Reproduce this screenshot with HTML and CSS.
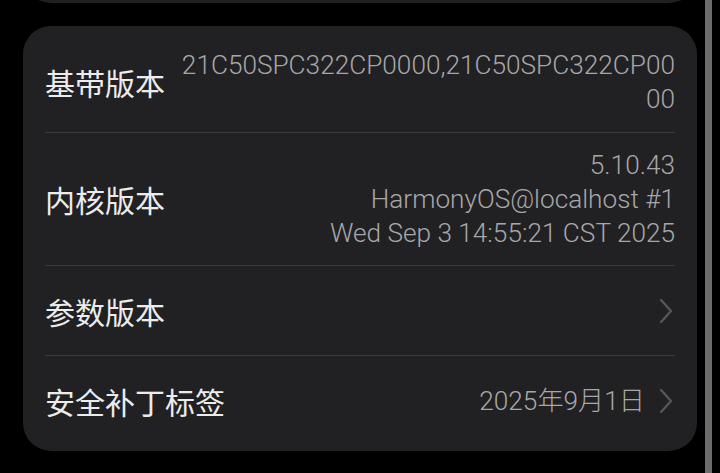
FILE: index.html
```html
<!DOCTYPE html>
<html lang="zh-CN">
<head>
<meta charset="utf-8">
<link rel="stylesheet" href="styles.css">
</head>
<body>
<div class="screen">
  <main class="content">
    <div class="card card-prev"></div>
    <section class="card card-main">
      <div class="row row-baseband">
        <div class="label">基带版本</div>
        <div class="value value-wrap">21C50SPC322CP0000,21C50SPC322CP0000</div>
      </div>
      <div class="row row-kernel">
        <div class="label">内核版本</div>
        <div class="value">5.10.43<br>HarmonyOS@localhost #1<br>Wed Sep 3 14:55:21 CST 2025</div>
      </div>
      <div class="row row-link">
        <div class="label">参数版本</div>
        <div class="value"></div>
        <svg class="chev" viewBox="0 0 16 26" width="16" height="26"><path d="M3 2 L13 13 L3 24" fill="none" stroke="#58585a" stroke-width="2.2" stroke-linecap="round" stroke-linejoin="round"/></svg>
      </div>
      <div class="row row-link last">
        <div class="label">安全补丁标签</div>
        <div class="value">2025年9月1日</div>
        <svg class="chev" viewBox="0 0 16 26" width="16" height="26"><path d="M3 2 L13 13 L3 24" fill="none" stroke="#58585a" stroke-width="2.2" stroke-linecap="round" stroke-linejoin="round"/></svg>
      </div>
    </section>
  </main>
  <div class="scrollbar"></div>
</div>
</body>
</html>
```

FILE: styles.css
```css
html, body {
  margin: 0;
  padding: 0;
  background: #000;
  width: 720px;
  height: 473px;
  overflow: hidden;
}
.screen {
  display: flex;
  height: 473px;
}
.content {
  width: 674px;
  padding-left: 23px;
  display: flex;
  flex-direction: column;
}
.card {
  background: #212123;
  border-radius: 28px;
}
.card-prev {
  height: 60px;
  margin-top: -57px;
}
.card-main {
  margin-top: 23px;
  padding: 6px 22px;
  display: flex;
  flex-direction: column;
}
.row {
  display: flex;
  align-items: center;
  gap: 12px;
  padding: 16px 0;
  border-bottom: 1px solid #3a3a3c;
}
.row-kernel {
  padding: 15px 0;
}
.row.last {
  border-bottom: none;
}
.row-link {
  min-height: 57px;
  padding: 16px 0;
  gap: 0;
}
.label {
  flex: none;
  font-family: "Noto Sans CJK SC", sans-serif;
  font-size: 30px;
  line-height: 40px;
  color: #ececec;
}
.value {
  flex: 1;
  text-align: right;
  font-family: Roboto, "Noto Sans CJK SC", sans-serif;
  font-weight: 300;
  font-size: 26.2px;
  line-height: 34px;
  color: #a7a7a9;
}
.value-wrap {
  word-break: break-all;
}
.row-link .value {
  margin-right: 13px;
}
.chev {
  flex: none;
  margin-right: 1px;
}
.scrollbar {
  margin-left: 8px;
  width: 7px;
  height: 473px;
  background: #6c6c6c;
}
```
